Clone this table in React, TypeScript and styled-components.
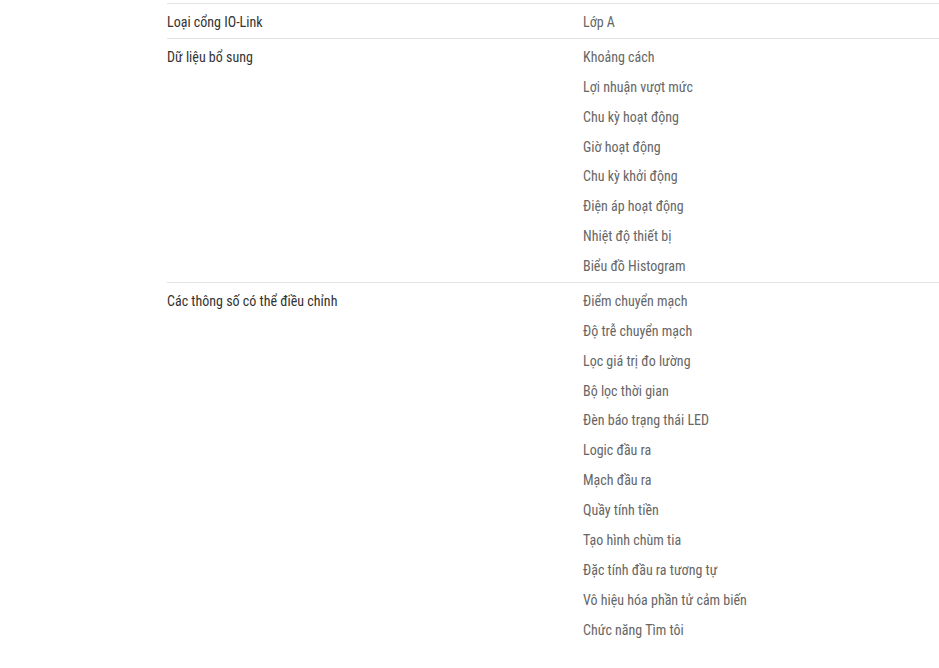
import styled, { createGlobalStyle } from "styled-components";

const GlobalStyle = createGlobalStyle`
  html, body {
    margin: 0;
    padding: 0;
    background: #fff;
  }
  body {
    font-family: "Roboto Condensed", Roboto, "Liberation Sans", sans-serif;
    font-size: 14px;
  }
`;

const Page = styled.div`
  padding: 3px 0 0 167px;
  overflow: hidden;
`;

const SpecTable = styled.div`
  display: flex;
  flex-direction: column;
  width: 772px;
`;

const SpecRow = styled.div`
  display: grid;
  grid-template-columns: 416px 1fr;
  border-top: 1px solid #e3e3e3;
  padding: 4px 0 0;
`;

const Label = styled.div`
  color: #333;
  line-height: 29.875px;
`;

const Values = styled.ul`
  list-style: none;
  margin: 0;
  padding: 0;
`;

const Value = styled.li`
  color: #666;
  line-height: 29.875px;
`;

const rows: { label: string; values: string[] }[] = [
  { label: "Loại cổng IO-Link", values: ["Lớp A"] },
  {
    label: "Dữ liệu bổ sung",
    values: [
      "Khoảng cách",
      "Lợi nhuận vượt mức",
      "Chu kỳ hoạt động",
      "Giờ hoạt động",
      "Chu kỳ khởi động",
      "Điện áp hoạt động",
      "Nhiệt độ thiết bị",
      "Biểu đồ Histogram",
    ],
  },
  {
    label: "Các thông số có thể điều chỉnh",
    values: [
      "Điểm chuyển mạch",
      "Độ trễ chuyển mạch",
      "Lọc giá trị đo lường",
      "Bộ lọc thời gian",
      "Đèn báo trạng thái LED",
      "Logic đầu ra",
      "Mạch đầu ra",
      "Quầy tính tiền",
      "Tạo hình chùm tia",
      "Đặc tính đầu ra tương tự",
      "Vô hiệu hóa phần tử cảm biến",
      "Chức năng Tìm tôi",
    ],
  },
];

export default function App() {
  return (
    <>
      <GlobalStyle />
      <Page>
        <SpecTable>
          {rows.map((row) => (
            <SpecRow key={row.label}>
              <Label>{row.label}</Label>
              <Values>
                {row.values.map((v) => (
                  <Value key={v}>{v}</Value>
                ))}
              </Values>
            </SpecRow>
          ))}
        </SpecTable>
      </Page>
    </>
  );
}
